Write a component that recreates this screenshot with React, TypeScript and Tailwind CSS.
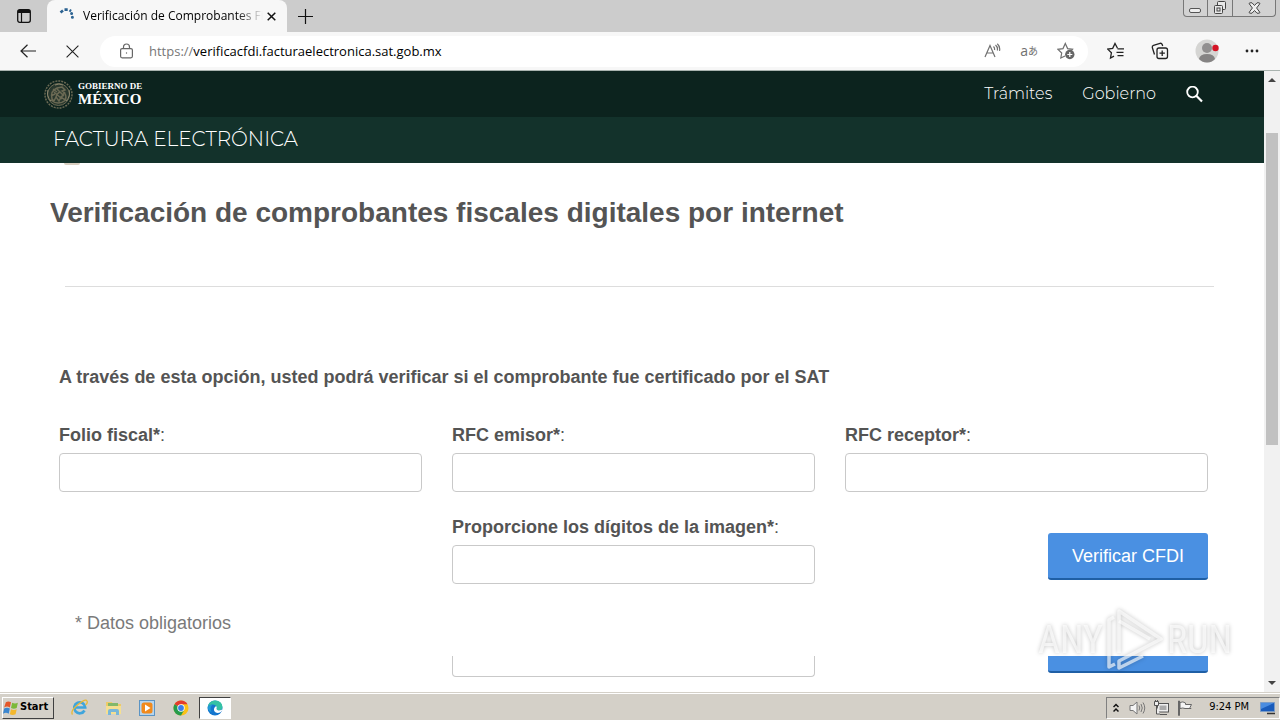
import type { ReactNode } from "react";

const ui = "font-['Open_Sans','Noto_Sans',sans-serif]";
const tahoma = "font-['DejaVu_Sans_Condensed','DejaVu_Sans',sans-serif]";

function TabStrip() {
  return (
    <div className="flex h-8 shrink-0 items-stretch bg-[#cccccc]">
      <button aria-label="Tab actions" className="flex w-[47px] items-center justify-center rounded-br-lg">
        <svg width="14" height="14" viewBox="0 0 14 14" fill="none" stroke="#111">
          <rect x="0.7" y="0.7" width="12.6" height="12.6" rx="2" strokeWidth="1.3" />
          <path d="M1 2.5h12" strokeWidth="3" />
          <path d="M4.5 3v10" strokeWidth="1.2" />
        </svg>
      </button>
      <div className="flex w-60 items-center rounded-t-lg bg-[#f7f7f7] pr-2 pl-3">
        <svg className="shrink-0" width="16" height="16" viewBox="0 0 16 16" fill="none" stroke="#2b6291" strokeWidth="2.6">
          <path d="M1.5 4.5 4 2.4M5.5 1.6h3.2M10.5 2.2l1.6 1" />
          <circle cx="12.6" cy="5.4" r=".8" strokeWidth="1.4" />
          <circle cx="13.4" cy="9.3" r=".8" strokeWidth="1.4" />
        </svg>
        <span className="ml-2 flex-1 overflow-hidden bg-linear-to-r from-black from-85% to-transparent bg-clip-text text-xs leading-5 whitespace-nowrap text-transparent">
          Verificación de Comprobantes Fi
        </span>
        <button aria-label="Close tab" className="flex size-4 items-center justify-center">
          <svg width="9" height="9" viewBox="0 0 9 9" stroke="#111" strokeWidth="1.5">
            <path d="M.7.7l7.6 7.6M8.3.7.7 8.3" />
          </svg>
        </button>
      </div>
      <button aria-label="New tab" className="flex w-9 items-center justify-center">
        <svg width="15" height="15" viewBox="0 0 15 15" stroke="#111" strokeWidth="1.2">
          <path d="M7.5 0v15M0 7.5h15" />
        </svg>
      </button>
      <div className="mr-1 ml-auto flex h-[17px] rounded-b border border-t-0 border-[#777] bg-[#d2d2d2]">
        <button aria-label="Minimize" className="flex w-6 items-center justify-center border-r border-[#777]">
          <svg width="13" height="12" viewBox="0 0 13 12" fill="#eee" stroke="#555">
            <rect x=".5" y="6.500" width="11" height="4" rx="1.500" />
          </svg>
        </button>
        <button aria-label="Restore" className="flex w-[25px] items-center justify-center border-r border-[#777]">
          <svg width="14" height="14" viewBox="0 0 14 14" fill="#e8e8e8" stroke="#444">
            <rect x="4.500" y=".5" width="8" height="8" rx="1" />
            <rect x="1.500" y="4.500" width="8" height="8" rx="1" />
            <rect x="4" y="7" width="3" height="3" />
          </svg>
        </button>
        <button aria-label="Close" className="flex w-[42px] items-center justify-center">
          <svg width="13" height="12" viewBox="0 0 13 12" fill="#eee" stroke="#444">
            <path d="M1 1.500 2 .8h2L6.500 3.500 9 .8h2l1 .7L8.600 6 12 10.500l-1 .7H9L6.500 8.500 4 11.200H2l-1-.7L4.400 6z" />
          </svg>
        </button>
      </div>
    </div>
  );
}

function Toolbar() {
  return (
    <div className="flex h-[39px] shrink-0 items-center border-b border-[#a9b3af] bg-[#f7f7f7]">
      <button aria-label="Back" className="ml-5 flex size-4 items-center justify-center">
        <svg width="16" height="14" viewBox="0 0 16 14" fill="none" stroke="#222" strokeWidth="1.2">
          <path d="M16 7H1M7.500.7 1 7l6.500 6.300" />
        </svg>
      </button>
      <button aria-label="Stop" className="ml-7 flex size-4 items-center justify-center">
        <svg width="13" height="13" viewBox="0 0 13 13" stroke="#222" strokeWidth="1.1">
          <path d="M.6.6l11.800 11.800M12.400.6.6 12.400" />
        </svg>
      </button>
      <div className="ml-5 flex h-[31px] min-w-0 flex-1 items-center rounded-full bg-white pr-[13px] pl-5">
        <svg className="shrink-0" width="13" height="16" viewBox="0 0 13 16" fill="none" stroke="#666" strokeWidth="1.200">
          <rect x=".6" y="5.600" width="11.800" height="9.200" rx="1.500" />
          <path d="M3.500 5.500V4a3 3 0 0 1 6 0v1.500" />
          <circle cx="6.500" cy="10" r=".7" fill="#666" stroke="none" />
        </svg>
        <div className="ml-4 flex flex-1 items-center text-[13px] leading-6">
          <label htmlFor="address" className="text-[#777]">https://</label>
          <input
            id="address"
            type="text"
            defaultValue="verificacfdi.facturaelectronica.sat.gob.mx"
            className="h-6 min-w-0 flex-1 bg-transparent text-black outline-none"
          />
        </div>
        <div className="flex items-center gap-[19px] text-[#707070]">
          <button aria-label="Read aloud">
            <svg width="17" height="16" viewBox="0 0 17 16" fill="none" stroke="currentColor" strokeWidth="1.200">
              <path d="M1 14 6 2.500 11 14M2.800 10h6.400M9.500 3.500q1.500 1.500 1 3.500M11.500 2q2.600 2.300 1.800 5.500M13.300.8q3.200 3 2.200 7" />
            </svg>
          </button>
          <button aria-label="Translate" className="flex items-center leading-4">
            <span className="text-sm leading-4">a</span>
            <span className="font-['Noto_Sans_CJK_JP',sans-serif] text-[10px]">あ</span>
          </button>
          <button aria-label="Add to favorites">
            <svg width="18" height="18" viewBox="0 0 18 18" fill="none" stroke="currentColor" strokeWidth="1.200">
              <path d="M8 14 3.800 16l.9-5L1 7.300l5-.7L8.300 1.500l2.300 5.100 5 .7-1.200 1.400" />
              <circle cx="12.800" cy="12.500" r="4.700" fill="#666" stroke="none" />
              <path d="M12.800 10v5M10.300 12.500h5" stroke="white" />
            </svg>
          </button>
        </div>
      </div>
      <div className="flex items-center pr-[21px] pl-[19px]">
        <button aria-label="Favorites">
          <svg width="18" height="18" viewBox="0 0 18 18" fill="none" stroke="#222" strokeWidth="1.300">
            <path d="M10.500 6.300 8 1.500 5.700 6.400l-5 .7 3.700 3.700-.9 5.200 3.500-1.900M10.500 6.800H17M9.500 10.300h7M10.500 13.700h6" />
          </svg>
        </button>
        <button aria-label="Collections" className="ml-[26px]">
          <svg width="18" height="18" viewBox="0 0 18 18" fill="none" stroke="#222" strokeWidth="1.300">
            <rect x="6" y="6" width="10.500" height="10.500" rx="2" />
            <path d="M11.200 8.500v5.400M8.500 11.200h5.400M3.500 12.500 1.300 5.500Q1 3.800 2.500 3.300L9 1.300q1.600-.4 2.200 1.200l.5 1.500" />
          </svg>
        </button>
        <button aria-label="Profile" className="ml-[26px]">
          <svg width="24" height="24" viewBox="0 0 24 24">
            <circle cx="12" cy="12" r="11.500" fill="#d5d5d3" />
            <circle cx="12" cy="9" r="5" fill="#918f8f" />
            <path d="M4 20q1-5 8-5t8 5q-3.500 3.500-8 3.500T4 20" fill="#858383" />
            <circle cx="20.500" cy="9" r="3.200" fill="#d41324" />
          </svg>
        </button>
        <button aria-label="Settings and more" className="ml-[26px]">
          <svg width="14" height="4" viewBox="0 0 14 4" fill="#222">
            <circle cx="2" cy="2" r="1.400" />
            <circle cx="7" cy="2" r="1.400" />
            <circle cx="12" cy="2" r="1.400" />
          </svg>
        </button>
      </div>
    </div>
  );
}

function SiteHeader() {
  return (
    <header className="font-['Montserrat','Inter',sans-serif] font-light text-white">
      <nav className="flex h-[46px] items-center bg-[#0c231e] pr-[61px] pl-[43px]">
        <a href="#inicio" className="flex items-center gap-1">
          <svg width="31" height="31" viewBox="0 0 31 31" fill="none" stroke="#6b6a54">
            <circle cx="15.500" cy="15.500" r="13.500" strokeWidth="1.500" strokeDasharray="2 1" />
            <circle cx="15.500" cy="15.500" r="11" fill="#29382e" />
            <path d="M9 20q-2-8 5-11l5-1 3 3-3 1q6 4 3 9l-4-3-2 4-3-4-2 4zM11 13l8 7M14 10l7 7M8 17l4-2M8 21q7 6 15 0M13 18q1-4 4-5M10 10l4 3M22 13l-5 7" strokeWidth="1.500" />
            <path d="M5 11q-2 6 3 11M26 11q2 6-3 11M12 6q4-2 8 0" stroke="#8a866d" />
          </svg>
          <span className="flex flex-col font-['Liberation_Serif',serif] font-bold">
            <span className="text-[9px] leading-[10px]">GOBIERNO DE</span>
            <span className="text-[15px] leading-4">MÉXICO</span>
          </span>
        </a>
        <a href="#tramites" className="ml-auto text-base">Trámites</a>
        <a href="#gobierno" className="ml-[30px] text-base">Gobierno</a>
        <button aria-label="Buscar" className="ml-[30px]">
          <svg width="17" height="17" viewBox="0 0 17 17" fill="none" stroke="white" strokeWidth="1.800">
            <circle cx="6.500" cy="6" r="5.300" />
            <path d="M10.300 9.800 16 15.500" strokeWidth="2.200" />
          </svg>
        </button>
      </nav>
      <div className="flex h-[46px] items-center bg-[#13322b] pb-0.5 pl-[53px]">
        <a href="#factura" className="text-xl leading-6">FACTURA ELECTRÓNICA</a>
      </div>
    </header>
  );
}

function Field({ id, label }: { id: string; label: string }) {
  return (
    <div>
      <label htmlFor={id} className="block leading-[26px] text-[#545454]">
        <b>{label}*</b>:
      </label>
      <input id={id} className="mt-[5px] block h-[39px] w-full rounded border border-[#c9c9c9] bg-white px-3" />
    </div>
  );
}

function Watermark() {
  return (
    <div
      aria-hidden="true"
      className="pointer-events-none absolute right-8 bottom-5 flex items-center font-['Liberation_Sans_Narrow','Roboto_Condensed','Roboto',sans-serif] text-[38px] leading-[60px] text-white/65 drop-shadow-[0_0_2px_rgba(0,0,0,0.35)]"
    >
      <span>ANY</span>
      <svg className="mx-1" width="56" height="64" viewBox="0 0 56 64" fill="none" stroke="currentColor" strokeWidth="3.500" strokeLinejoin="round">
        <path d="M12 45V3l42 28L12 53v7l24-12" />
        <path d="M7 9 2 12v47l6-3M12 13l31 18" />
      </svg>
      <span>RUN</span>
    </div>
  );
}

function Page() {
  return (
    <main className="relative min-w-0 flex-1 overflow-hidden bg-white font-['Liberation_Sans',Arial,sans-serif] text-lg">
      <SiteHeader />
      <div className="ml-16 h-0.5 w-4 rounded-b-full bg-[#d9cfc0]" />
      <h1 className="mt-8 pl-[50px] text-[28px] leading-8 font-bold text-[#545454]">
        Verificación de comprobantes fiscales digitales por internet
      </h1>
      <hr className="mt-[57px] mr-[50px] ml-[65px] border-[#dddddd]" />
      <form className="pr-14 pl-[59px]" onSubmit={(e) => e.preventDefault()}>
        <p className="mt-[77px] leading-[26px] font-bold text-[#545454]">
          A través de esta opción, usted podrá verificar si el comprobante fue certificado por el SAT
        </p>
        <div className="mt-8 grid grid-cols-3 gap-x-[30px] gap-y-[22px]">
          <Field id="folio" label="Folio fiscal" />
          <Field id="emisor" label="RFC emisor" />
          <Field id="receptor" label="RFC receptor" />
          <div className="col-start-2">
            <Field id="digitos" label="Proporcione los dígitos de la imagen" />
          </div>
          <div className="flex items-end justify-end pb-1">
            <button className="h-[47px] w-40 rounded-[3px] border-b-2 border-[#1f5fa5] bg-[#4a90e2] text-white">
              Verificar CFDI
            </button>
          </div>
        </div>
        <p className="mt-[26px] pl-4 leading-[26px] text-[#7a7a7a]">* Datos obligatorios</p>
        <div className="mt-5 grid grid-cols-3 gap-x-[30px]">
          <div className="col-start-2 h-[21px] rounded-b border border-t-0 border-[#c9c9c9]" />
          <div className="ml-auto h-[17px] w-40 rounded-b-[3px] border-b-2 border-[#1f5fa5] bg-[#4a90e2]" />
        </div>
      </form>
      <Watermark />
    </main>
  );
}

function Scrollbar() {
  return (
    <div className="flex w-4 shrink-0 flex-col items-center bg-[#f1f1f1] py-1.5">
      <svg width="8" height="5" viewBox="0 0 8 5" fill="#444"><path d="M0 5 4 1l4 4z" /></svg>
      <div className="mt-[51px] h-[312px] w-3 bg-[#c1c1c1]" />
      <svg className="mt-auto" width="8" height="5" viewBox="0 0 8 5" fill="#444"><path d="M0 0l4 4 4-4z" /></svg>
    </div>
  );
}

function TaskItem({ label, children }: { label: string; children: ReactNode }) {
  return (
    <button aria-label={label} className="flex h-[22px] w-[34px] items-center justify-center">
      {children}
    </button>
  );
}

function Taskbar() {
  return (
    <footer className={`flex h-7 shrink-0 items-center border-t border-[#d4d0c8] bg-[#d4d0c8] pt-0.5 shadow-[inset_0_1px_0_#fff] ${tahoma}`}>
      <button className="ml-0.5 flex h-[22px] w-[52px] items-center gap-px border border-t-white border-r-[#404040] border-b-[#404040] border-l-white text-[11px] font-bold">
        <svg className="shrink-0" width="16" height="16" viewBox="0 0 14 14">
          <path d="M2.500 2q2-1.500 4.500 0L6 6.500Q3.500 5 1 6.500z" fill="#e4572a" />
          <path d="M8 2.400q2.500 1.300 5 0L12 7q-2.500 1.300-5 0z" fill="#7cb93a" />
          <path d="M1 7.500q2.500-1.500 5 0L5 12Q2.500 10.500 0 12z" fill="#3b86cf" />
          <path d="M7 8q2.500 1.300 5 0l-1 4.500q-2.500 1.300-5 0z" fill="#f3b72c" />
        </svg>
        Start
      </button>
      <div className="ml-2 flex items-center">
        <TaskItem label="Internet Explorer">
          <svg width="17" height="17" viewBox="0 0 17 17" fill="none">
            <path d="M13.500 11.500a5.500 5.500 0 1 1 .7-3H4" stroke="#3fa5dc" strokeWidth="2.700" />
            <path d="M1.500 15.500Q-1 12 7 5.500T16 2q1 2-1.500 4" stroke="#e8b936" strokeWidth="1.300" />
          </svg>
        </TaskItem>
        <TaskItem label="Explorer">
          <svg width="17" height="16" viewBox="0 0 17 16">
            <path d="M1 2h6l1 2h8v10H1z" fill="#edcb68" />
            <path d="M3 3h10v4H3z" fill="#82b86a" />
            <path d="M1 6h15v8H1z" fill="#f5df91" />
            <path d="M3 15v-4q0-2 2-2h7q2 0 2 2v4h-3v-3H6v3z" fill="#79b7d9" />
          </svg>
        </TaskItem>
        <TaskItem label="Media Player">
          <svg width="16" height="16" viewBox="0 0 16 16">
            <rect x=".5" y=".5" width="15" height="15" fill="#b6d5ee" stroke="#5b94c4" />
            <rect x="2.500" y="2.500" width="11" height="11" rx="2.500" fill="#f18a1c" />
            <path d="M6 4.500v7L11.500 8z" fill="white" />
          </svg>
        </TaskItem>
        <TaskItem label="Chrome">
          <svg width="16" height="16" viewBox="0 0 16 16">
            <circle cx="8" cy="8" r="7.500" fill="#fbc116" />
            <path d="M8 8 1.500 4.250A7.500 7.500 0 0 1 14.500 4.250H8z" fill="#e33b2e" />
            <path d="M8 8 1.500 4.250A7.500 7.500 0 0 0 8 15.500l3.200-5.600z" fill="#269b4c" />
            <circle cx="8" cy="8" r="3.700" fill="white" />
            <circle cx="8" cy="8" r="2.900" fill="#3b7de8" />
          </svg>
        </TaskItem>
        <button aria-label="Edge" className="ml-px flex h-[22px] w-8 items-center justify-center border border-t-[#404040] border-r-white border-b-white border-l-[#404040] bg-white">
          <svg width="16" height="16" viewBox="0 0 16 16">
            <circle cx="8" cy="8" r="7.500" fill="#1476ce" />
            <path d="M.7 7Q2 .5 8 .5q7 0 7.500 6.500Q15 10.500 11 10.500q-2 0-1.500-1.500Q10.500 5 6 4.500 2 4.500.7 7" fill="#34c2a5" />
            <path d="M.7 7Q2.500 4 6 4.500q-4 3-1.500 7.500Q1 11 .7 7" fill="#219bd7" />
            <path d="M9.500 9q.7-1.500-.3-3-3 2-2 5 2.500 3.500 7 .7 1.500-2 1-2.200-5 2-5.700-.5" fill="white" />
          </svg>
        </button>
      </div>
      <div className="ml-auto flex h-[22px] items-center border border-t-[#808080] border-r-white border-b-white border-l-[#808080] pr-[3px] pl-1.5">
        <button aria-label="Show hidden icons">
          <svg width="6" height="10" viewBox="0 0 6 10" fill="none" stroke="#111" strokeWidth="1.500"><path d="M.5 4 3 1.500 5.500 4M.5 8.500 3 6l2.500 2.500" /></svg>
        </button>
        <svg className="ml-2.5" width="17" height="16" viewBox="0 0 17 16" fill="#f4f4f4" stroke="#777">
          <path d="M1 5.500h3L8 2v12L4 10.500H1z" />
          <path d="M10 5.500q1.500 2.500 0 5M12 4q2.500 4 0 8M14 2.500q3.500 5.500 0 11" fill="none" />
        </svg>
        <svg className="ml-[7px]" width="17" height="16" viewBox="0 0 17 16" fill="#eee" stroke="#555">
          <rect x="4.500" y="3.500" width="11" height="8.500" />
          <rect x="6.500" y="5.500" width="7" height="4.500" fill="#aaa" stroke="none" />
          <path d="M7 14.500h7M1.500 1.500h4v4h-4zM3.500 6v8H7M2.500 0v2M4.500 0v2" />
        </svg>
        <svg className="ml-[7px]" width="17" height="16" viewBox="0 0 17 16" fill="#f4f4f4" stroke="#666">
          <path d="M1.500 1v14.500h1V1zM3 2.500q3-1.500 5.500.5v1.500h6l-1.500 3 1 1H8Q6 7.500 3 8.500z" />
        </svg>
        <time className="ml-[15px] text-[11px]">9:24 PM</time>
        <svg className="ml-2.5" width="17" height="16" viewBox="0 0 17 16">
          <path d="M1.500 2.500h14v9h-14z" fill="#195bbb" stroke="#7c9dc7" />
          <path d="M2 3h13L2 9z" fill="#4a8ce0" />
          <path d="M8 13.500h8" stroke="#333" strokeWidth="1.500" />
        </svg>
      </div>
    </footer>
  );
}

export default function App() {
  return (
    <div className={`flex h-screen flex-col overflow-hidden ${ui}`}>
      <TabStrip />
      <Toolbar />
      <div className="flex min-h-0 flex-1">
        <Page />
        <Scrollbar />
      </div>
      <Taskbar />
    </div>
  );
}
